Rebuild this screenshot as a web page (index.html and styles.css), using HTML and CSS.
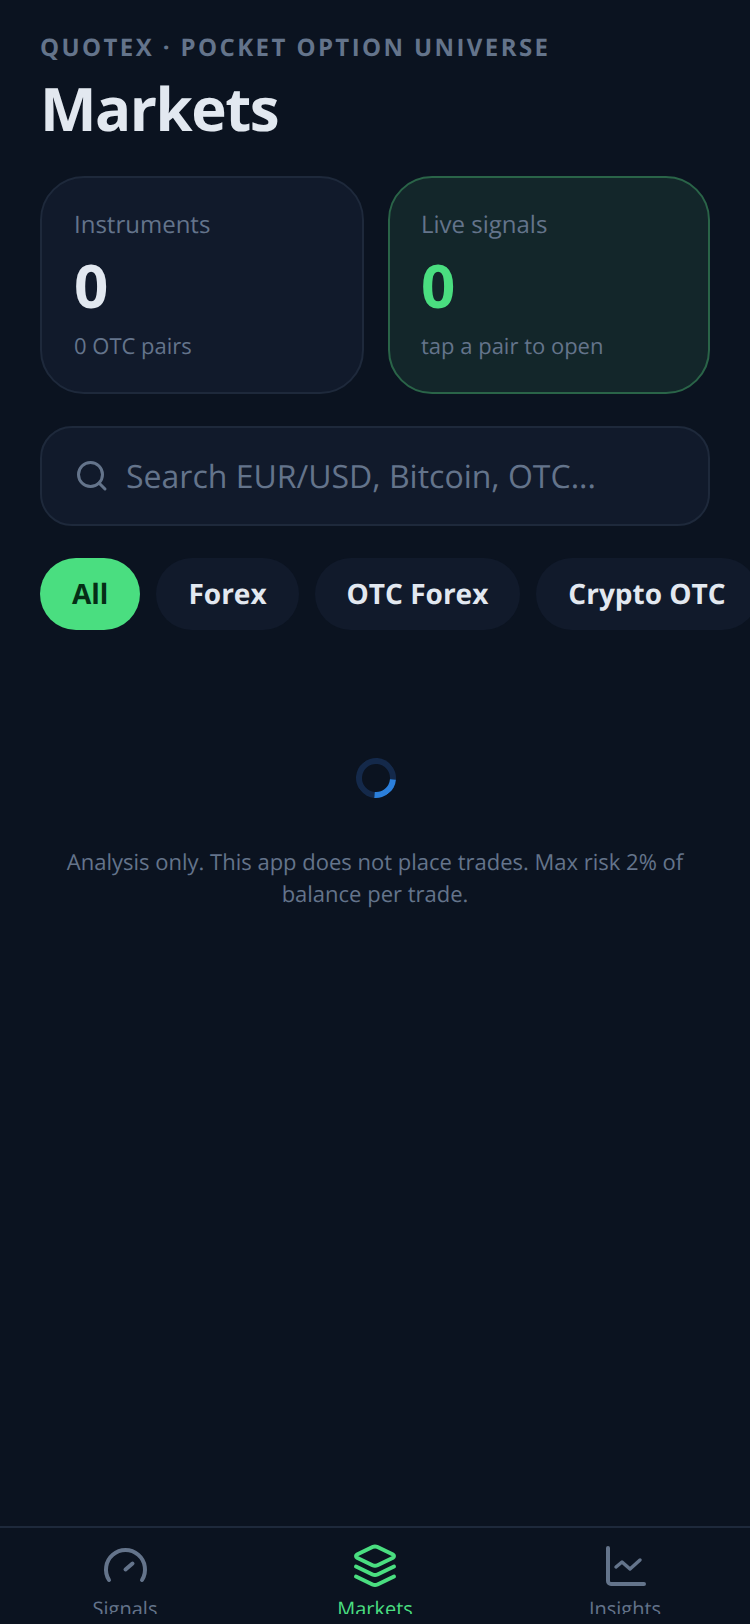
FILE: index.html
```html
<!DOCTYPE html>
<html>
<head>
    <title>Markets</title>
    <meta charset="utf-8">
    <link rel="stylesheet" href="styles.css">
</head>
<body>
    <div class="app">
        <main class="content">
            <div class="eyebrow">QUOTEX · POCKET OPTION UNIVERSE</div>
            <h1>Markets</h1>

            <div class="stats">
                <div class="stat">
                    <div class="stat-label">Instruments</div>
                    <div class="stat-value">0</div>
                    <div class="stat-sub">0 OTC pairs</div>
                </div>
                <div class="stat stat-live">
                    <div class="stat-label">Live signals</div>
                    <div class="stat-value">0</div>
                    <div class="stat-sub">tap a pair to open</div>
                </div>
            </div>

            <div class="search">
                <svg class="search-icon" viewBox="0 0 32 32" fill="none" stroke="currentColor" stroke-width="3" stroke-linecap="round" stroke-linejoin="round">
                    <circle cx="14.500" cy="14.500" r="12"></circle>
                    <path d="M29 29l-6-6"></path>
                </svg>
                <span class="search-text">Search EUR/USD, Bitcoin, OTC...</span>
            </div>

            <div class="chips">
                <div class="chip chip-active">All</div>
                <div class="chip">Forex</div>
                <div class="chip">OTC Forex</div>
                <div class="chip">Crypto OTC</div>
            </div>

            <div class="loading"><div class="spinner"></div></div>

            <p class="note">Analysis only. This app does not place trades. Max risk 2% of balance per trade.</p>
        </main>

        <nav class="tabbar">
            <div class="tab">
                <svg class="tab-icon" viewBox="0 0 48 48" fill="none" stroke="currentColor" stroke-width="4" stroke-linecap="round" stroke-linejoin="round">
                    <path d="M8 38A19.500 19.500 0 1 1 41 38"></path>
                    <path d="M24.500 27.500l7-6"></path>
                </svg>
                <span>Signals</span>
            </div>
            <div class="tab tab-active">
                <svg class="tab-icon" viewBox="0 0 48 48" fill="none" stroke="currentColor" stroke-width="4" stroke-linecap="round" stroke-linejoin="round">
                    <path d="M21.500 5L6 12.500a1.800 1.800 0 0 0 0 3.200L21.500 23.200a6 6 0 0 0 5 0L42 15.700a1.800 1.800 0 0 0 0-3.200L26.500 5a6 6 0 0 0-5 0z"></path>
                    <path d="M5 24.500l16.500 8a6 6 0 0 0 5 0l16.500-8"></path>
                    <path d="M5 34.500l16.500 8a6 6 0 0 0 5 0l16.500-8"></path>
                </svg>
                <span>Markets</span>
            </div>
            <div class="tab">
                <svg class="tab-icon" viewBox="0 0 48 48" fill="none" stroke="currentColor" stroke-width="4" stroke-linecap="round" stroke-linejoin="round">
                    <path d="M7 6v33a3 3 0 0 0 3 3h33"></path>
                    <path d="M15 25l6-5 8 7 10-9" stroke-width="3.500"></path>
                </svg>
                <span>Insights</span>
            </div>
        </nav>
    </div>
</body>
</html>
```

FILE: styles.css
```css
* {
    box-sizing: border-box;
}
html, body {
    margin: 0;
    padding: 0;
    height: 100%;
    background: #0b1320;
}
body {
    font-family: "Open Sans", "Noto Sans", sans-serif;
    color: #e2e8f0;
    text-rendering: geometricPrecision;
}
.app {
    width: 750px;
    height: 1624px;
    display: flex;
    flex-direction: column;
    padding-bottom: 10px;
    overflow: hidden;
}
.content {
    flex: 1;
    min-height: 0;
    padding: 32px 40px 0;
    overflow: hidden;
}
.eyebrow {
    font-size: 24px;
    line-height: 32px;
    font-weight: 700;
    letter-spacing: 2.4px;
    color: #64748b;
}
h1 {
    margin: 4px 0 0;
    font-size: 60px;
    line-height: 80px;
    font-weight: 700;
    letter-spacing: -1.5px;
    color: #e2e8f0;
}
.stats {
    display: grid;
    grid-template-columns: 324px 322px;
    gap: 24px;
    margin-top: 28px;
}
.stat {
    height: 218px;
    padding: 31px 32px;
    border: 2px solid #1e293b;
    border-radius: 44px;
    background: #111a2b;
}
.stat-live {
    padding-left: 31px;
    background: #13262a;
    border-color: #2a6448;
}
.stat-label {
    font-size: 24px;
    line-height: 32px;
    color: #64748b;
}
.stat-value {
    margin-top: 8px;
    font-size: 60px;
    line-height: 72px;
    font-weight: 700;
    color: #e2e8f0;
}
.stat-live .stat-value {
    color: #4ade80;
}
.stat-sub {
    margin-top: 9px;
    font-size: 22px;
    line-height: 32px;
    color: #64748b;
}
.search {
    display: flex;
    align-items: center;
    gap: 18px;
    height: 100px;
    margin-top: 32px;
    padding: 0 34px;
    border: 2px solid #1e293b;
    border-radius: 32px;
    background: #111a2b;
}
.search-icon {
    width: 32px;
    height: 32px;
    flex: none;
    color: #64748b;
}
.search-text {
    margin-top: 2px;
    font-size: 32px;
    line-height: 44px;
    color: #64748b;
}
.chips {
    display: flex;
    gap: 16px;
    margin-top: 32px;
    margin-right: -40px;
    white-space: nowrap;
}
.chip {
    flex: none;
    height: 72px;
    padding: 0 32px;
    border-radius: 36px;
    background: #111a2b;
    font-size: 28px;
    line-height: 72px;
    font-weight: 700;
    color: #e2e8f0;
}
.chip-active {
    background: #4ade80;
    color: #052e16;
}
.loading {
    display: flex;
    justify-content: center;
    margin-top: 128px;
    padding-left: 2px;
}
.spinner {
    width: 40px;
    height: 40px;
    border: 6px solid #14294a;
    border-right-color: #2b7fdb;
    border-radius: 50%;
    transform: rotate(50deg);
}
.note {
    margin: 48px 0 0;
    font-size: 22px;
    line-height: 32px;
    text-align: center;
    color: #64748b;
}
.tabbar {
    flex: none;
    display: flex;
    height: 88px;
    border-top: 2px solid #1e293b;
    overflow: hidden;
}
.tab {
    flex: 1;
    display: flex;
    flex-direction: column;
    align-items: center;
    padding-top: 14px;
    font-size: 20px;
    line-height: 28px;
    color: #64748b;
}
.tab-active {
    color: #4ade80;
}
.tab-icon {
    width: 48px;
    height: 48px;
    flex: none;
    margin-bottom: 5px;
}
```
